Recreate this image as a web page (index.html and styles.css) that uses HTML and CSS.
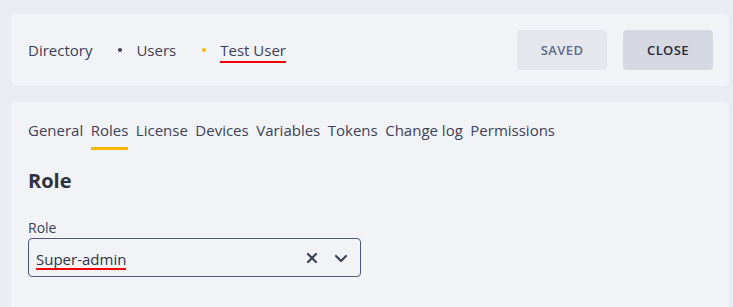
FILE: index.html
```html
<!DOCTYPE html>
<html>
<head>
    <title>Test User</title>
    <link rel="stylesheet" href="styles.css">
</head>
<body>

    <div class="header-card">
        <div class="breadcrumbs">
            <span class="crumb">Directory</span>
            <span class="dot"></span>
            <span class="crumb">Users</span>
            <span class="dot current"></span>
            <span class="crumb underlined">Test User</span>
        </div>
        <div class="actions">
            <button class="btn btn-saved">SAVED</button>
            <button class="btn btn-close">CLOSE</button>
        </div>
    </div>

    <div class="content-card">
        <div class="tabs">
            <span class="tab">General</span>
            <span class="tab active">Roles</span>
            <span class="tab">License</span>
            <span class="tab">Devices</span>
            <span class="tab">Variables</span>
            <span class="tab">Tokens</span>
            <span class="tab">Change log</span>
            <span class="tab">Permissions</span>
        </div>

        <h2 class="section-title">Role</h2>

        <label class="field-label">Role</label>
        <div class="select-box">
            <span class="select-value">Super-admin</span>
            <span class="select-icons">
                <svg width="12" height="12" viewBox="0 0 12 12">
                    <path d="M2 2 L10 10 M10 2 L2 10" stroke="#3d4259" stroke-width="2.2" stroke-linecap="round"/>
                </svg>
                <svg width="14" height="10" viewBox="0 0 14 10">
                    <path d="M2 3 L7 8 L12 3" fill="none" stroke="#3d4259" stroke-width="2.2" stroke-linecap="round" stroke-linejoin="round"/>
                </svg>
            </span>
        </div>
    </div>

</body>
</html>
```

FILE: styles.css
```css
html, body {
    height: 100%;
    overflow: hidden;
}

body {
    font-family: "Open Sans", Arial, sans-serif;
    margin: 0;
    padding: 14px 4px 0 11px;
    box-sizing: border-box;
    background-color: #ebecf1;
    color: #3d4259;
}

.header-card {
    display: flex;
    justify-content: space-between;
    align-items: center;
    height: 72px;
    padding: 0 16px 0 17px;
    background-color: #f2f3f7;
    border-radius: 5px;
}

.breadcrumbs {
    display: flex;
    align-items: center;
    font-size: 15px;
    color: #3b4058;
}

.crumb {
    line-height: 20px;
}

.crumb.underlined {
    border-bottom: 2px solid #f00000;
    line-height: 20px;
    padding-bottom: 1px;
    margin-top: 3px;
}

.dot {
    width: 4px;
    height: 4px;
    border-radius: 50%;
    background: #3d4463;
    margin: 0 14px 0 26px;
}

.dot.current {
    background: #fbb800;
}

.actions {
    display: flex;
    gap: 16px;
}

.btn {
    width: 90px;
    height: 40px;
    border: none;
    border-radius: 4px;
    font-family: "Open Sans", Arial, sans-serif;
    font-size: 13px;
    font-weight: 600;
    letter-spacing: 0.4px;
    cursor: pointer;
}

.btn-saved {
    background: #e5e7ec;
    color: #5f6a8a;
}

.btn-close {
    background: #d5d8e1;
    color: #262a3a;
}

.content-card {
    box-sizing: border-box;
    margin-top: 16px;
    height: 205px;
    padding: 18px 17px 0 17px;
    background-color: #f2f3f7;
    border-radius: 5px 5px 0 0;
}

.tabs {
    display: flex;
    gap: 7.5px;
    font-size: 15px;
    color: #3d4259;
}

.tab {
    padding-bottom: 7px;
    border-bottom: 3px solid transparent;
    line-height: 20px;
}

.tab.active {
    border-bottom-color: #fbb800;
}

.section-title {
    margin: 19px 0 0 0;
    font-size: 20px;
    font-weight: 700;
    color: #2e3141;
    line-height: 24px;
}

.field-label {
    display: block;
    margin-top: 26px;
    font-size: 14px;
    line-height: 18px;
    color: #3d4259;
}

.select-box {
    display: flex;
    justify-content: space-between;
    align-items: center;
    height: 37px;
    margin-top: 1px;
    border: 1px solid #50587a;
    border-radius: 4px;
    padding: 0 0 0 7px;
    width: 324px;
}

.select-value {
    font-size: 15px;
    color: #2f3448;
    border-bottom: 2px solid #f00000;
    line-height: 18px;
    margin-top: 4px;
}

.select-icons {
    display: flex;
    align-items: center;
    gap: 16px;
    padding-right: 12px;
}
```
